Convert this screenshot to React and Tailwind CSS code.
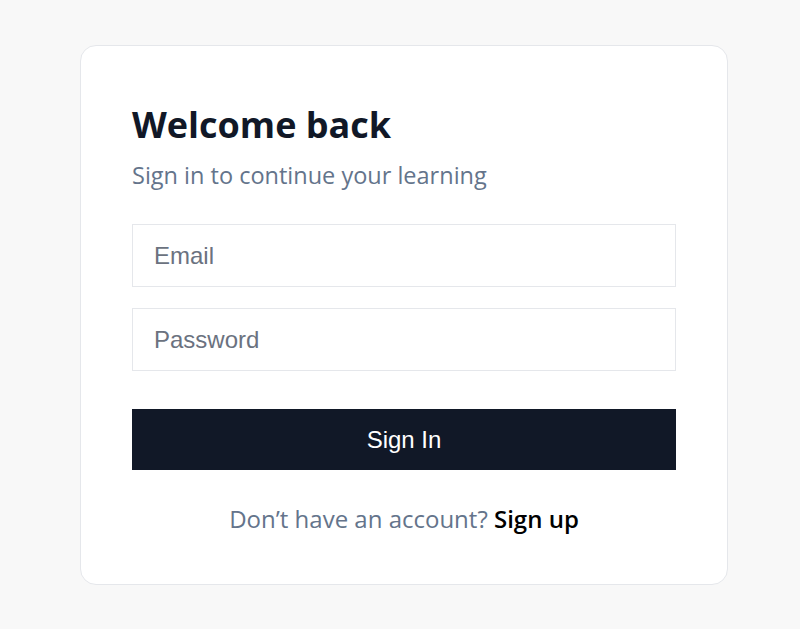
export default function App() {
  const sans = { fontFamily: '"Open Sans", "Noto Sans", sans-serif' };
  return (
    <div className="min-h-[629px] w-full bg-[#f8f8f8] flex justify-center pl-[8px] pt-[45px]">
      <div className="w-[648px] h-[540px] bg-white rounded-2xl border border-[#e5e7eb] px-[51px] pt-[57px] flex flex-col">
        <h1 className="text-[36px] leading-[44px] font-bold text-[#111827]" style={sans}>Welcome back</h1>
        <p className="mt-[12px] text-[23.5px] leading-[32px] text-[#64748b]" style={sans}>Sign in to continue your learning</p>
        <div className="mt-[33px] flex flex-col gap-[21px]" style={{ fontFamily: '"Liberation Sans", Arial, sans-serif' }}>
          <input
            type="email"
            placeholder="Email"
            className="h-[63px] w-full border border-[#e5e7eb] px-[21px] text-[24px] outline-none placeholder:text-[#6b7280]"
          />
          <input
            type="password"
            placeholder="Password"
            className="h-[63px] w-full border border-[#e5e7eb] px-[21px] text-[24px] outline-none placeholder:text-[#6b7280]"
          />
        </div>
        <button
          className="mt-[38px] h-[61px] w-full bg-[#111827] text-white text-[24px]"
          style={{ fontFamily: '"Liberation Sans", Arial, sans-serif' }}
        >
          Sign In
        </button>
        <p className="mt-[33px] text-center text-[24px] leading-[32px] text-[#64748b]" style={sans}>
          Don’t have an account? <span className="font-semibold text-black">Sign up</span>
        </p>
      </div>
    </div>
  );
}
